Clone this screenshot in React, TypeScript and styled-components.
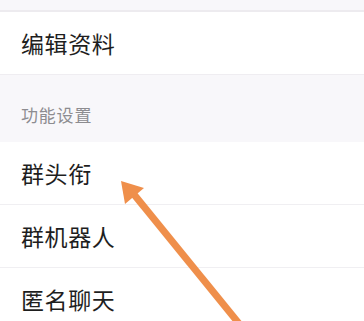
import styled, { createGlobalStyle } from 'styled-components';

const GlobalStyle = createGlobalStyle`
  html, body {
    margin: 0;
    padding: 0;
    background: #f8f7fa;
    font-family: "Noto Sans CJK SC", "Noto Sans", sans-serif;
  }
`;

type RowProps = {
  label: string;
  last?: boolean;
};

const Row = ({ label, last }: RowProps) => (
  <RowItem $last={last}>
    <RowLabel>{label}</RowLabel>
  </RowItem>
);

const App = () => {
  return (
    <>
      <GlobalStyle />
      <Page>
        <TopGap />
        <Group $topBorder>
          <Row label="编辑资料" last />
        </Group>
        <SectionHeader>功能设置</SectionHeader>
        <Group>
          <Row label="群头衔" />
          <Row label="群机器人" />
          <Row label="匿名聊天" last />
        </Group>
        <Arrow width="364" height="321" viewBox="0 0 364 321">
          <line
            x1="241"
            y1="326"
            x2="132"
            y2="192"
            stroke="#ef8f4b"
            strokeWidth="7"
          />
          <polygon points="121,181 144,188 125,204" fill="#ef8f4b" />
        </Arrow>
      </Page>
    </>
  );
};

const Page = styled.div`
  position: relative;
  width: 364px;
  height: 321px;
  overflow: hidden;
  background: #f8f7fa;
`;

const TopGap = styled.div`
  height: 10px;
`;

const Group = styled.div<{ $topBorder?: boolean }>`
  background: #ffffff;
  border-top: ${(p) => (p.$topBorder ? '2px solid #edebef' : 'none')};
  border-bottom: 1px solid #efedf1;
`;

const RowItem = styled.div<{ $last?: boolean }>`
  height: 62px;
  display: flex;
  align-items: center;
  padding-left: 21px;
  border-bottom: ${(p) => (p.$last ? 'none' : '1px solid #f0eff2')};
`;

const RowLabel = styled.span`
  font-size: 23px;
  color: #1e1e1e;
  letter-spacing: 0.6px;
`;

const SectionHeader = styled.div`
  height: 67px;
  display: flex;
  align-items: flex-end;
  padding: 0 0 15px 21px;
  box-sizing: border-box;
  font-size: 17px;
  color: #8d8c90;
  letter-spacing: 0.8px;
`;

const Arrow = styled.svg`
  position: absolute;
  left: 0;
  top: 0;
  pointer-events: none;
`;

export default App;
